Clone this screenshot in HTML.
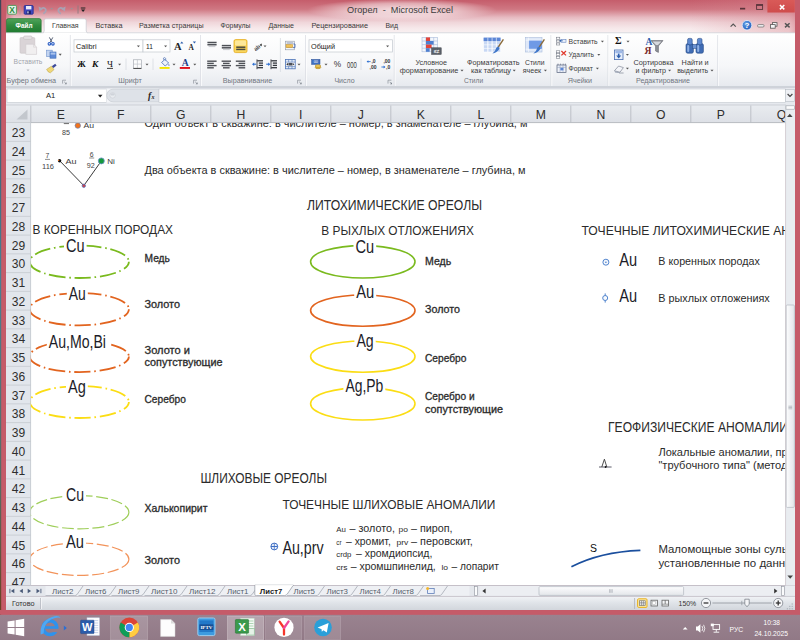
<!DOCTYPE html>
<html lang="ru"><head><meta charset="utf-8"><title>Огорел - Microsoft Excel</title>
<style>
html,body{margin:0;padding:0;width:800px;height:640px;overflow:hidden;background:#947c89}
svg{display:block;font-family:"Liberation Sans", "DejaVu Sans", sans-serif}
text{white-space:pre}
</style></head><body>
<svg width="800" height="640" viewBox="0 0 800 640">
<defs>
<linearGradient id="gTitle" x1="0" y1="0" x2="0" y2="1">
<stop offset="0" stop-color="#c55d6b"/><stop offset="0.28" stop-color="#cf7782"/><stop offset="0.52" stop-color="#e6b9c0"/><stop offset="0.68" stop-color="#f0d6da"/><stop offset="0.85" stop-color="#f6e8ea"/><stop offset="1" stop-color="#f9f1f2"/>
</linearGradient>
<linearGradient id="gRightFade" x1="0" y1="0" x2="1" y2="0">
<stop offset="0" stop-color="#d98892" stop-opacity="0"/><stop offset="0.9" stop-color="#d98892" stop-opacity="0.4"/><stop offset="1" stop-color="#cf707c" stop-opacity="0.7"/>
</linearGradient>
<linearGradient id="gLeftFade" x1="0" y1="0" x2="1" y2="0">
<stop offset="0" stop-color="#c75f6d" stop-opacity="1"/><stop offset="1" stop-color="#c75f6d" stop-opacity="0"/>
</linearGradient>
<radialGradient id="gGlow" cx="0.5" cy="0.5" r="0.5">
<stop offset="0" stop-color="#fff" stop-opacity="0.75"/><stop offset="0.6" stop-color="#fff" stop-opacity="0.45"/><stop offset="1" stop-color="#fff" stop-opacity="0"/>
</radialGradient>
<linearGradient id="gRibbon" x1="0" y1="0" x2="0" y2="1">
<stop offset="0" stop-color="#ffffff"/><stop offset="0.6" stop-color="#f6f7f9"/><stop offset="1" stop-color="#e6e9ee"/>
</linearGradient>
<linearGradient id="gFile" x1="0" y1="0" x2="0" y2="1">
<stop offset="0" stop-color="#4fa35a"/><stop offset="0.5" stop-color="#2f8a3e"/><stop offset="1" stop-color="#1f7a30"/>
</linearGradient>
<linearGradient id="gHdr" x1="0" y1="0" x2="0" y2="1">
<stop offset="0" stop-color="#e9ecf0"/><stop offset="1" stop-color="#dde0e6"/>
</linearGradient>
<linearGradient id="gStatus" x1="0" y1="0" x2="0" y2="1">
<stop offset="0" stop-color="#f1f3f6"/><stop offset="0.5" stop-color="#dfe3e8"/><stop offset="1" stop-color="#d2d6dc"/>
</linearGradient>
<linearGradient id="gScroll" x1="0" y1="0" x2="0" y2="1">
<stop offset="0" stop-color="#fdfdfe"/><stop offset="1" stop-color="#e3e6ea"/>
</linearGradient>
<linearGradient id="gScrollV" x1="0" y1="0" x2="1" y2="0">
<stop offset="0" stop-color="#fdfdfe"/><stop offset="1" stop-color="#e3e6ea"/>
</linearGradient>
<linearGradient id="gClose" x1="0" y1="0" x2="0" y2="1">
<stop offset="0" stop-color="#d95a58"/><stop offset="1" stop-color="#cf4c4c"/>
</linearGradient>
<radialGradient id="gHelp" cx="0.4" cy="0.35" r="0.7">
<stop offset="0" stop-color="#6aa4e8"/><stop offset="1" stop-color="#1c58b8"/>
</radialGradient>
<linearGradient id="gTask" x1="0" y1="0" x2="0" y2="1">
<stop offset="0" stop-color="#9a8390"/><stop offset="1" stop-color="#917986"/>
</linearGradient>
</defs>
<rect x="0" y="614" width="800" height="26" fill="url(#gTask)"/>
<rect x="0" y="0" width="800" height="614.5" fill="#c55b69"/>
<rect x="0" y="0" width="800" height="33" fill="url(#gTitle)"/>
<rect x="690" y="0" width="110" height="33" fill="url(#gRightFade)"/>
<rect x="0" y="0" width="14" height="33" fill="url(#gLeftFade)"/>
<rect x="0" y="0" width="6" height="614" fill="#c55b69"/>
<rect x="795" y="0" width="5" height="614" fill="#c55b69"/>
<linearGradient id="gDesk" x1="0" y1="0" x2="0" y2="1"><stop offset="0" stop-color="#3c4658"/><stop offset="0.45" stop-color="#4a7f92"/><stop offset="0.8" stop-color="#5a6a60"/><stop offset="1" stop-color="#6a4020"/></linearGradient>
<rect x="0" y="0" width="1.2" height="614.5" fill="url(#gDesk)"/>
<ellipse cx="402" cy="10" rx="95" ry="11" fill="url(#gGlow)"/>
<text x="400" y="13.4" font-size="9.4" textLength="106" lengthAdjust="spacingAndGlyphs" fill="#3b3b3b" text-anchor="middle">Огорел  -  Microsoft Excel</text>
<rect x="7.8" y="5.4" width="8.6" height="8.8" fill="#e6f2e8" stroke="#4a9a56" stroke-width="0.9" rx="1"/>
<text x="12.1" y="12.8" font-size="8.4" fill="#2b8a3c" font-weight="bold" text-anchor="middle">X</text>
<line x1="20" y1="5.6" x2="20" y2="14.4" stroke="#b0959b" stroke-width="0.9" />
<rect x="24.2" y="5.6" width="9" height="8.6" fill="#3f48c0" stroke="#262e8f" stroke-width="0.8" rx="0.8"/>
<rect x="26" y="6" width="5.4" height="3.4" fill="#e9ecf8"/>
<rect x="26.6" y="10.8" width="4.2" height="3.2" fill="#1b1f66"/>
<rect x="27.3" y="11.3" width="1.3" height="2.1" fill="#d6daf0"/>
<path d="M40.6,9.6 Q43.6,6.4 45.6,9.2 Q46.6,11.6 43.4,13.8" fill="none" stroke="#a9a2b4" stroke-width="1.7"/>
<path d="M38.6,6.6 L39.4,11.4 L43.2,8.8 Z" fill="#a9a2b4"/>
<path d="M50.2,8.05 L53.2,8.05 L51.7,9.850000000000001 Z" fill="#a08f96"/>
<path d="M63.6,9.6 Q60.6,6.4 58.6,9.2 Q57.6,11.6 60.8,13.8" fill="none" stroke="#a9a2b4" stroke-width="1.7"/>
<path d="M65.6,6.6 L64.8,11.4 L61,8.8 Z" fill="#a9a2b4"/>
<path d="M70.2,8.05 L73.2,8.05 L71.7,9.850000000000001 Z" fill="#a08f96"/>
<line x1="78" y1="5.4" x2="78" y2="13.6" stroke="#8e7a80" stroke-width="0.9" />
<line x1="80.8" y1="8" x2="85.4" y2="8" stroke="#222" stroke-width="1" />
<path d="M81.0,9.549999999999999 L85.19999999999999,9.549999999999999 L83.1,12.07 Z" fill="#222"/>
<rect x="740" y="7.8" width="5.2" height="1.7" fill="#5a343b"/>
<rect x="756.6" y="4.8" width="6" height="4.6" fill="none" stroke="#5a343b" stroke-width="0.9"/>
<line x1="756.2" y1="5" x2="763" y2="5" stroke="#5a343b" stroke-width="1.7" />
<rect x="767.4" y="0" width="27.4" height="12.5" fill="url(#gClose)"/>
<path d="M779.9,5 L784.3,9.4 M784.3,5 L779.9,9.4" fill="none" stroke="#fff" stroke-width="1.5"/>
<path d="M730.6,26.6 L733.2,24 L735.8,26.6" fill="none" stroke="#555" stroke-width="1.2"/>
<circle cx="747" cy="25.2" r="4.8" fill="url(#gHelp)" stroke="#e6eefb" stroke-width="0.8"/>
<text x="747" y="28.2" font-size="8" fill="#fff" font-weight="bold" text-anchor="middle">?</text>
<rect x="757.6" y="24.6" width="6.4" height="2.4" fill="#f4f4f6" stroke="#666" stroke-width="0.7" rx="1"/>
<rect x="772.4" y="22.6" width="4.6" height="3.6" fill="#f4f4f6" stroke="#555" stroke-width="0.8"/>
<rect x="770.6" y="24.6" width="4.6" height="3.6" fill="#f4f4f6" stroke="#555" stroke-width="0.8"/>
<path d="M785,23.2 L789.6,27.4 M789.6,23.2 L785,27.4" fill="none" stroke="#555" stroke-width="1.5"/>
<path d="M6.4,32.8 L6.4,20.6 Q6.4,18.6 8.4,18.6 L39.2,18.6 Q41.2,18.6 41.2,20.6 L41.2,32.8 Z" fill="url(#gFile)" stroke="#1b6b2a" stroke-width="0.6"/>
<text x="24" y="28.3" font-size="7.4" textLength="17" lengthAdjust="spacingAndGlyphs" fill="#fff" font-weight="bold" text-anchor="middle">Файл</text>
<path d="M43.2,33 L44.2,31 L44.2,20.6 Q44.2,18.8 46,18.8 L84.4,18.8 Q86.2,18.8 86.2,20.6 L86.2,31 L87.2,33 Z" fill="#fff" stroke="#c5c9d0" stroke-width="0.7"/>
<text x="52" y="28.2" font-size="7.4" textLength="26.6" lengthAdjust="spacingAndGlyphs" fill="#3a3a3a">Главная</text>
<text x="95.5" y="28.2" font-size="7.4" textLength="27" lengthAdjust="spacingAndGlyphs" fill="#3a3a3a">Вставка</text>
<text x="139" y="28.2" font-size="7.4" textLength="64.5" lengthAdjust="spacingAndGlyphs" fill="#3a3a3a">Разметка страницы</text>
<text x="220.5" y="28.2" font-size="7.4" textLength="30" lengthAdjust="spacingAndGlyphs" fill="#3a3a3a">Формулы</text>
<text x="268.5" y="28.2" font-size="7.4" textLength="25.5" lengthAdjust="spacingAndGlyphs" fill="#3a3a3a">Данные</text>
<text x="311.5" y="28.2" font-size="7.4" textLength="56.5" lengthAdjust="spacingAndGlyphs" fill="#3a3a3a">Рецензирование</text>
<text x="385.5" y="28.2" font-size="7.4" textLength="12.5" lengthAdjust="spacingAndGlyphs" fill="#3a3a3a">Вид</text>
<rect x="6" y="32.8" width="789" height="54.6" fill="url(#gRibbon)"/>
<line x1="6" y1="32.8" x2="43.6" y2="32.8" stroke="#c9cdd4" stroke-width="0.7" />
<line x1="87" y1="32.8" x2="795" y2="32.8" stroke="#c9cdd4" stroke-width="0.7" />
<line x1="70.4" y1="35" x2="70.4" y2="86" stroke="#d4d8de" stroke-width="0.8" />
<line x1="71.2" y1="35" x2="71.2" y2="86" stroke="#ffffff" stroke-width="0.8" />
<line x1="200.6" y1="35" x2="200.6" y2="86" stroke="#d4d8de" stroke-width="0.8" />
<line x1="201.4" y1="35" x2="201.4" y2="86" stroke="#ffffff" stroke-width="0.8" />
<line x1="305.6" y1="35" x2="305.6" y2="86" stroke="#d4d8de" stroke-width="0.8" />
<line x1="306.40000000000003" y1="35" x2="306.40000000000003" y2="86" stroke="#ffffff" stroke-width="0.8" />
<line x1="394.3" y1="35" x2="394.3" y2="86" stroke="#d4d8de" stroke-width="0.8" />
<line x1="395.1" y1="35" x2="395.1" y2="86" stroke="#ffffff" stroke-width="0.8" />
<line x1="551" y1="35" x2="551" y2="86" stroke="#d4d8de" stroke-width="0.8" />
<line x1="551.8" y1="35" x2="551.8" y2="86" stroke="#ffffff" stroke-width="0.8" />
<line x1="608" y1="35" x2="608" y2="86" stroke="#d4d8de" stroke-width="0.8" />
<line x1="608.8" y1="35" x2="608.8" y2="86" stroke="#ffffff" stroke-width="0.8" />
<line x1="717.8" y1="35" x2="717.8" y2="86" stroke="#d4d8de" stroke-width="0.8" />
<line x1="718.5999999999999" y1="35" x2="718.5999999999999" y2="86" stroke="#ffffff" stroke-width="0.8" />
<rect x="20" y="37.6" width="14.8" height="15.6" fill="#dad4d7" stroke="#c9c3c6" stroke-width="0.6" rx="1"/>
<rect x="23.6" y="36" width="8.4" height="3.4" fill="#e4e0e2" stroke="#c2bcbf" stroke-width="0.6" rx="1.2"/>
<path d="M25.8,44.2 L33.6,44.2 L36.6,47.2 L36.6,54.4 L25.8,54.4 Z" fill="#f1eff0" stroke="#cfcacd" stroke-width="0.6"/>
<path d="M33.6,44.2 L33.6,47.2 L36.6,47.2" fill="none" stroke="#cfcacd" stroke-width="0.5"/>
<text x="13.6" y="64.4" font-size="7.4" textLength="28.8" lengthAdjust="spacingAndGlyphs" fill="#a3a6ad">Вставить</text>
<path d="M26.5,69.45 L29.5,69.45 L28,71.25 Z" fill="#b5b8be"/>
<path d="M49.4,37.4 L52,42.2 M52.8,37.4 L50.2,42.2" fill="none" stroke="#5a6478" stroke-width="1"/>
<circle cx="49.4" cy="43.8" r="1.3" fill="#dfe8f8" stroke="#2d5fc4" stroke-width="1.1"/>
<circle cx="52.9" cy="43.8" r="1.3" fill="#dfe8f8" stroke="#2d5fc4" stroke-width="1.1"/>
<rect x="46.6" y="50.2" width="5.6" height="6.4" fill="#c3d4f0" stroke="#6f92cc" stroke-width="0.6"/>
<rect x="50" y="52" width="6" height="6.2" fill="#5f8ad6" stroke="#3f6db8" stroke-width="0.6"/>
<rect x="50.6" y="52.6" width="4.8" height="2" fill="#a9c2ec"/>
<path d="M58.7,53.85 L61.7,53.85 L60.2,55.65 Z" fill="#555"/>
<path d="M46.6,69.4 L51.4,66.2 L54,69.6 L50.4,72.8 Q48,72.6 46.6,69.4 Z" fill="#f0d878" stroke="#b59a3a" stroke-width="0.5"/>
<path d="M51.8,66.2 L55.2,63.8 L56.6,65.4 L53.4,68 Z" fill="#3d4a9a"/>
<text x="6.6" y="83" font-size="7.4" textLength="49.4" lengthAdjust="spacingAndGlyphs" fill="#70757e">Буфер обмена</text>
<path d="M62.60000000000001,83.6 L62.60000000000001,80.2 L66.0,80.2" fill="none" stroke="#8a8f98" stroke-width="0.7"/>
<path d="M66.60000000000001,82.2 L66.60000000000001,84.2 L64.60000000000001,84.2 Z" fill="#7c828b"/>
<line x1="64.2" y1="81.8" x2="66.0" y2="83.6" stroke="#7c828b" stroke-width="0.7" />
<rect x="74" y="39.8" width="69" height="12.2" fill="#fff" stroke="#c3c8cf" stroke-width="0.7"/>
<rect x="143" y="39.8" width="27" height="12.2" fill="#fff" stroke="#c3c8cf" stroke-width="0.7"/>
<text x="76" y="48.8" font-size="7.8" textLength="20.6" lengthAdjust="spacingAndGlyphs" fill="#222">Calibri</text>
<path d="M136.9,45.45 L139.9,45.45 L138.4,47.25 Z" fill="#555"/>
<text x="146" y="48.8" font-size="7.4" textLength="6.8" lengthAdjust="spacingAndGlyphs" fill="#222">11</text>
<path d="M164.1,45.45 L167.1,45.45 L165.6,47.25 Z" fill="#555"/>
<text x="174" y="50" font-size="10.5" fill="#222" font-weight="bold" font-family='"Liberation Serif", "DejaVu Serif", serif'>A</text>
<path d="M180.2,43.4 L183.4,43.4 L181.8,41.4 Z" fill="#2d5fae"/>
<text x="188.6" y="50" font-size="7.4" fill="#222" font-weight="bold" font-family='"Liberation Serif", "DejaVu Serif", serif'>A</text>
<path d="M192.8,41.6 L196,41.6 L194.4,43.6 Z" fill="#2d5fae"/>
<text x="77.2" y="66.8" font-size="9.2" textLength="8.4" lengthAdjust="spacingAndGlyphs" fill="#111" font-weight="bold" font-family='"Liberation Serif", "DejaVu Serif", serif'>Ж</text>
<text x="92" y="66.8" font-size="9.2" textLength="6.4" lengthAdjust="spacingAndGlyphs" fill="#111" font-weight="bold" font-family='"Liberation Serif", "DejaVu Serif", serif' font-style="italic">К</text>
<text x="107" y="66.8" font-size="9.2" textLength="6" lengthAdjust="spacingAndGlyphs" fill="#111" font-family='"Liberation Serif", "DejaVu Serif", serif'>Ч</text>
<line x1="107" y1="68.4" x2="113" y2="68.4" stroke="#111" stroke-width="0.8" />
<path d="M118.1,63.650000000000006 L121.1,63.650000000000006 L119.6,65.45 Z" fill="#555"/>
<line x1="126" y1="58.6" x2="126" y2="70" stroke="#d7dbe1" stroke-width="0.8" />
<rect x="133.4" y="59.8" width="8" height="8.6" fill="#fdfdfd" stroke="#9a9fa8" stroke-width="0.6"/>
<line x1="137.4" y1="59.8" x2="137.4" y2="68.4" stroke="#b7bbc2" stroke-width="0.6" />
<line x1="133.4" y1="64.1" x2="141.4" y2="64.1" stroke="#b7bbc2" stroke-width="0.6" />
<line x1="133.4" y1="68.4" x2="141.4" y2="68.4" stroke="#444" stroke-width="1" />
<path d="M145.5,63.650000000000006 L148.5,63.650000000000006 L147,65.45 Z" fill="#555"/>
<line x1="153" y1="58.6" x2="153" y2="70" stroke="#d7dbe1" stroke-width="0.8" />
<path d="M161.6,62.4 L165,59.4 L168.6,63 L165.2,66 Z" fill="#eef3fb" stroke="#4a6fb3" stroke-width="0.8"/>
<path d="M164,60 Q162.4,57.6 164.6,57.6 Q166.4,57.8 165.6,60.6" fill="none" stroke="#4a6fb3" stroke-width="0.7"/>
<path d="M168.8,63.4 Q170.2,65.4 169,66 Q167.8,65.4 168.8,63.4 Z" fill="#4a6fb3"/>
<rect x="159.6" y="67" width="10" height="1.9" fill="#f3e600"/>
<path d="M172.5,63.650000000000006 L175.5,63.650000000000006 L174,65.45 Z" fill="#555"/>
<text x="181.8" y="66.4" font-size="9.6" fill="#1f3f8a" font-weight="bold" font-family='"Liberation Serif", "DejaVu Serif", serif'>A</text>
<rect x="179.8" y="67" width="10.2" height="1.9" fill="#e0121b"/>
<path d="M193.3,63.650000000000006 L196.3,63.650000000000006 L194.8,65.45 Z" fill="#555"/>
<text x="118.2" y="83" font-size="7.4" textLength="23.6" lengthAdjust="spacingAndGlyphs" fill="#70757e">Шрифт</text>
<path d="M193.6,83.6 L193.6,80.2 L197.0,80.2" fill="none" stroke="#8a8f98" stroke-width="0.7"/>
<path d="M197.6,82.2 L197.6,84.2 L195.6,84.2 Z" fill="#7c828b"/>
<line x1="195.20000000000002" y1="81.8" x2="197.0" y2="83.6" stroke="#7c828b" stroke-width="0.7" />
<line x1="207.4" y1="42.5" x2="216.6" y2="42.5" stroke="#4e5157" stroke-width="1.5" />
<line x1="207.4" y1="44.7" x2="216.6" y2="44.7" stroke="#4e5157" stroke-width="1.5" />
<line x1="208.6" y1="46.6" x2="215.4" y2="46.6" stroke="#b9bcc2" stroke-width="0.8" />
<line x1="221.8" y1="45.6" x2="231.0" y2="45.6" stroke="#4e5157" stroke-width="1.5" />
<line x1="221.8" y1="47.800000000000004" x2="231.0" y2="47.800000000000004" stroke="#4e5157" stroke-width="1.5" />
<line x1="223" y1="49.6" x2="229.8" y2="49.6" stroke="#b9bcc2" stroke-width="0.8" />
<rect x="234" y="39.6" width="13" height="13" fill="#fbd75e" stroke="#e3a91a" stroke-width="0.8" rx="1.6"/>
<rect x="235" y="40.4" width="11" height="5" fill="#fde89a" rx="1.2"/>
<line x1="236.2" y1="47.2" x2="245.39999999999998" y2="47.2" stroke="#4a4a40" stroke-width="1.5" />
<line x1="236.2" y1="49.400000000000006" x2="245.39999999999998" y2="49.400000000000006" stroke="#4a4a40" stroke-width="1.5" />
<text x="252.4" y="49.4" font-size="6" fill="#444" transform="rotate(-40 257 46)">ab</text>
<path d="M255,50.4 L261.6,44.4" fill="none" stroke="#555" stroke-width="0.8"/>
<path d="M261.8,43.6 L262,46.4 L259.6,44.6 Z" fill="#555"/>
<path d="M263.5,45.45 L266.5,45.45 L265,47.25 Z" fill="#555"/>
<line x1="280.4" y1="38" x2="280.4" y2="72" stroke="#d7dbe1" stroke-width="0.8" />
<rect x="285.4" y="41.2" width="9" height="8.6" fill="#f4f6fa" stroke="#8e96a6" stroke-width="0.6"/>
<line x1="286.6" y1="43.0" x2="293.20000000000005" y2="43.0" stroke="#6a7a9a" stroke-width="0.8" />
<line x1="286.6" y1="45.1" x2="291.20000000000005" y2="45.1" stroke="#6a7a9a" stroke-width="0.8" />
<line x1="286.6" y1="47.2" x2="293.20000000000005" y2="47.2" stroke="#6a7a9a" stroke-width="0.8" />
<rect x="286" y="44.6" width="6.6" height="3" fill="#f0c15a" stroke="#c79428" stroke-width="0.5"/>
<path d="M293.4,44 L295,44 L295,47.6 L293,47.6" fill="none" stroke="#3f66b0" stroke-width="0.8"/>
<line x1="207.2" y1="61.2" x2="216.6" y2="61.2" stroke="#4e5157" stroke-width="1.4" />
<line x1="207.2" y1="63.400000000000006" x2="213.79999999999998" y2="63.400000000000006" stroke="#4e5157" stroke-width="1.4" />
<line x1="207.2" y1="65.60000000000001" x2="216.6" y2="65.60000000000001" stroke="#4e5157" stroke-width="1.4" />
<line x1="207.2" y1="67.8" x2="213.79999999999998" y2="67.8" stroke="#4e5157" stroke-width="1.4" />
<line x1="221.6" y1="61.2" x2="231.0" y2="61.2" stroke="#4e5157" stroke-width="1.4" />
<line x1="223.0" y1="63.400000000000006" x2="229.6" y2="63.400000000000006" stroke="#4e5157" stroke-width="1.4" />
<line x1="221.6" y1="65.60000000000001" x2="231.0" y2="65.60000000000001" stroke="#4e5157" stroke-width="1.4" />
<line x1="223.0" y1="67.8" x2="229.6" y2="67.8" stroke="#4e5157" stroke-width="1.4" />
<line x1="235.8" y1="61.2" x2="245.20000000000002" y2="61.2" stroke="#4e5157" stroke-width="1.4" />
<line x1="238.60000000000002" y1="63.400000000000006" x2="245.20000000000002" y2="63.400000000000006" stroke="#4e5157" stroke-width="1.4" />
<line x1="235.8" y1="65.60000000000001" x2="245.20000000000002" y2="65.60000000000001" stroke="#4e5157" stroke-width="1.4" />
<line x1="238.60000000000002" y1="67.8" x2="245.20000000000002" y2="67.8" stroke="#4e5157" stroke-width="1.4" />
<line x1="257.2" y1="60.8" x2="263.0" y2="60.8" stroke="#33363c" stroke-width="1.3" />
<line x1="258.8" y1="63.099999999999994" x2="263.0" y2="63.099999999999994" stroke="#33363c" stroke-width="1.3" />
<line x1="258.8" y1="65.39999999999999" x2="263.0" y2="65.39999999999999" stroke="#33363c" stroke-width="1.3" />
<line x1="257.2" y1="67.7" x2="263.0" y2="67.7" stroke="#33363c" stroke-width="1.3" />
<line x1="257.0" y1="59.4" x2="257.0" y2="69.2" stroke="#33363c" stroke-width="0.9" />
<path d="M256.2,64.2 L253.0,64.2" fill="none" stroke="#2d6fd0" stroke-width="1.1"/>
<path d="M252.0,64.2 L254.2,62.4 L254.2,66 Z" fill="#2d6fd0"/>
<line x1="271.20000000000005" y1="60.8" x2="277.00000000000006" y2="60.8" stroke="#33363c" stroke-width="1.3" />
<line x1="272.80000000000007" y1="63.099999999999994" x2="277.00000000000006" y2="63.099999999999994" stroke="#33363c" stroke-width="1.3" />
<line x1="272.80000000000007" y1="65.39999999999999" x2="277.00000000000006" y2="65.39999999999999" stroke="#33363c" stroke-width="1.3" />
<line x1="271.20000000000005" y1="67.7" x2="277.00000000000006" y2="67.7" stroke="#33363c" stroke-width="1.3" />
<line x1="271.0" y1="59.4" x2="271.0" y2="69.2" stroke="#33363c" stroke-width="0.9" />
<path d="M266.20000000000005,64.2 L269.20000000000005,64.2" fill="none" stroke="#2d6fd0" stroke-width="1.1"/>
<path d="M270.40000000000003,64.2 L268.20000000000005,62.4 L268.20000000000005,66 Z" fill="#2d6fd0"/>
<rect x="285.4" y="59.4" width="9.8" height="9.4" fill="#dfe8f6" stroke="#4f76b8" stroke-width="0.8"/>
<line x1="285.4" y1="62.2" x2="295.2" y2="62.2" stroke="#4f76b8" stroke-width="0.7" />
<line x1="285.4" y1="66.2" x2="295.2" y2="66.2" stroke="#4f76b8" stroke-width="0.7" />
<line x1="288.6" y1="59.4" x2="288.6" y2="62.2" stroke="#4f76b8" stroke-width="0.6" />
<line x1="292" y1="59.4" x2="292" y2="62.2" stroke="#4f76b8" stroke-width="0.6" />
<line x1="288.6" y1="66.2" x2="288.6" y2="68.8" stroke="#4f76b8" stroke-width="0.6" />
<line x1="292" y1="66.2" x2="292" y2="68.8" stroke="#4f76b8" stroke-width="0.6" />
<rect x="286" y="62.6" width="8.6" height="3.2" fill="#f4f6fa"/>
<rect x="288.4" y="62.9" width="3.8" height="2.6" fill="#4a4f5a"/>
<path d="M286.2,64.2 L288,63 L288,65.4 Z M294.4,64.2 L292.6,63 L292.6,65.4 Z" fill="#333"/>
<path d="M297.5,63.650000000000006 L300.5,63.650000000000006 L299,65.45 Z" fill="#555"/>
<text x="222.8" y="83" font-size="7.4" textLength="49.4" lengthAdjust="spacingAndGlyphs" fill="#70757e">Выравнивание</text>
<path d="M297.59999999999997,83.6 L297.59999999999997,80.2 L301.0,80.2" fill="none" stroke="#8a8f98" stroke-width="0.7"/>
<path d="M301.59999999999997,82.2 L301.59999999999997,84.2 L299.59999999999997,84.2 Z" fill="#7c828b"/>
<line x1="299.2" y1="81.8" x2="301.0" y2="83.6" stroke="#7c828b" stroke-width="0.7" />
<rect x="309" y="39.8" width="83.4" height="12.2" fill="#fff" stroke="#c3c8cf" stroke-width="0.7"/>
<text x="311" y="48.8" font-size="7.4" textLength="24" lengthAdjust="spacingAndGlyphs" fill="#222">Общий</text>
<path d="M386.1,45.45 L389.1,45.45 L387.6,47.25 Z" fill="#555"/>
<rect x="311.6" y="59.4" width="8.4" height="5" fill="#3f6fc0" stroke="#2a4f94" stroke-width="0.5"/>
<text x="315.8" y="63.4" font-size="3.8" fill="#fff" text-anchor="middle">00</text>
<ellipse cx="318" cy="67.4" rx="2.8" ry="1.3" fill="#e8b63a" stroke="#a67c14" stroke-width="0.5"/>
<ellipse cx="318" cy="66" rx="2.8" ry="1.3" fill="#f4d060" stroke="#a67c14" stroke-width="0.5"/>
<path d="M324.5,63.650000000000006 L327.5,63.650000000000006 L326,65.45 Z" fill="#555"/>
<text x="333.8" y="67.2" font-size="8.6" textLength="7.4" lengthAdjust="spacingAndGlyphs" fill="#333">%</text>
<text x="347" y="67.6" font-size="9.2" textLength="9.8" lengthAdjust="spacingAndGlyphs" fill="#333">000</text>
<line x1="361" y1="58.6" x2="361" y2="70" stroke="#d7dbe1" stroke-width="0.8" />
<text x="371.4" y="63.4" font-size="5" fill="#333" font-weight="bold">,0</text>
<text x="369.6" y="68.8" font-size="5" fill="#333" font-weight="bold">,00</text>
<path d="M370.6,61.6 L367.4,61.6" fill="none" stroke="#2d6fd0" stroke-width="0.9"/>
<path d="M366.6,61.6 L368.4,60.2 L368.4,63 Z" fill="#2d6fd0"/>
<text x="383.4" y="63.4" font-size="5" fill="#333" font-weight="bold">,00</text>
<text x="386" y="68.8" font-size="5" fill="#333" font-weight="bold">,0</text>
<path d="M381.4,67 L384.6,67" fill="none" stroke="#2d6fd0" stroke-width="0.9"/>
<path d="M385.4,67 L383.6,65.6 L383.6,68.4 Z" fill="#2d6fd0"/>
<text x="334.4" y="83" font-size="7.4" textLength="20.2" lengthAdjust="spacingAndGlyphs" fill="#70757e">Число</text>
<path d="M388.0,83.6 L388.0,80.2 L391.40000000000003,80.2" fill="none" stroke="#8a8f98" stroke-width="0.7"/>
<path d="M392.0,82.2 L392.0,84.2 L390.0,84.2 Z" fill="#7c828b"/>
<line x1="389.6" y1="81.8" x2="391.40000000000003" y2="83.6" stroke="#7c828b" stroke-width="0.7" />
<rect x="422" y="37.4" width="15.6" height="14.4" fill="#f4f7fc" stroke="#a9bbdb" stroke-width="0.6"/>
<line x1="425.9" y1="37.4" x2="425.9" y2="51.8" stroke="#a9bbdb" stroke-width="0.6" />
<line x1="429.8" y1="37.4" x2="429.8" y2="51.8" stroke="#a9bbdb" stroke-width="0.6" />
<line x1="433.7" y1="37.4" x2="433.7" y2="51.8" stroke="#a9bbdb" stroke-width="0.6" />
<line x1="422" y1="41.0" x2="437.6" y2="41.0" stroke="#a9bbdb" stroke-width="0.6" />
<line x1="422" y1="44.6" x2="437.6" y2="44.6" stroke="#a9bbdb" stroke-width="0.6" />
<line x1="422" y1="48.2" x2="437.6" y2="48.2" stroke="#a9bbdb" stroke-width="0.6" />
<rect x="426" y="37.4" width="4" height="3.6" fill="#e2443a"/>
<rect x="426" y="41" width="7.6" height="3.6" fill="#4e7fd0"/>
<rect x="426" y="44.6" width="5.6" height="3.6" fill="#e2443a"/>
<rect x="426" y="48.2" width="3.6" height="3.6" fill="#4e7fd0"/>
<rect x="431.6" y="47.8" width="9.6" height="6.6" fill="#5a5f68" stroke="#3a3e46" stroke-width="0.5"/>
<text x="436.4" y="53" font-size="5" fill="#fff" font-weight="bold" text-anchor="middle">≤≠</text>
<text x="415.4" y="65" font-size="7.4" textLength="31.6" lengthAdjust="spacingAndGlyphs" fill="#3c3c3c">Условное</text>
<text x="399.8" y="72.8" font-size="7.4" textLength="58.6" lengthAdjust="spacingAndGlyphs" fill="#3c3c3c">форматирование</text>
<path d="M460.5,69.65 L463.5,69.65 L462,71.45 Z" fill="#555"/>
<rect x="483.6" y="37.6" width="17" height="14.4" fill="#c8d8f4" stroke="#fff" stroke-width="0.6"/>
<line x1="487.85" y1="37.6" x2="487.85" y2="52.0" stroke="#fff" stroke-width="0.6" />
<line x1="492.1" y1="37.6" x2="492.1" y2="52.0" stroke="#fff" stroke-width="0.6" />
<line x1="496.35" y1="37.6" x2="496.35" y2="52.0" stroke="#fff" stroke-width="0.6" />
<line x1="483.6" y1="41.2" x2="500.6" y2="41.2" stroke="#fff" stroke-width="0.6" />
<line x1="483.6" y1="44.800000000000004" x2="500.6" y2="44.800000000000004" stroke="#fff" stroke-width="0.6" />
<line x1="483.6" y1="48.400000000000006" x2="500.6" y2="48.400000000000006" stroke="#fff" stroke-width="0.6" />
<rect x="483.6" y="37.6" width="17" height="3.6" fill="#5b86d6"/>
<line x1="487.85" y1="37.6" x2="487.85" y2="52" stroke="#fff" stroke-width="0.6" />
<line x1="492.1" y1="37.6" x2="492.1" y2="52" stroke="#fff" stroke-width="0.6" />
<line x1="496.35" y1="37.6" x2="496.35" y2="52" stroke="#fff" stroke-width="0.6" />
<path d="M503.4,39.4 L498.2,47.2" fill="none" stroke="#8a6a3a" stroke-width="1.4"/>
<path d="M498.4,46.6 L499.6,48.6 Q497,53 492.4,53.6 Q495.6,51 496.4,47.4 Z" fill="#3f76c8"/>
<text x="467" y="65" font-size="7.4" textLength="52.6" lengthAdjust="spacingAndGlyphs" fill="#3c3c3c">Форматировать</text>
<text x="471" y="72.8" font-size="7.4" textLength="40" lengthAdjust="spacingAndGlyphs" fill="#3c3c3c">как таблицу</text>
<path d="M512.7,69.65 L515.7,69.65 L514.2,71.45 Z" fill="#555"/>
<rect x="525.6" y="37.6" width="16.4" height="14.4" fill="#dfe8f8" stroke="#a9bbdb" stroke-width="0.6"/>
<rect x="528.6" y="40.2" width="13.4" height="9" fill="#6f9ae6"/>
<line x1="528.6" y1="37.6" x2="528.6" y2="52" stroke="#fff" stroke-width="0.6" />
<line x1="525.6" y1="40.2" x2="542" y2="40.2" stroke="#fff" stroke-width="0.6" />
<line x1="525.6" y1="49.2" x2="542" y2="49.2" stroke="#fff" stroke-width="0.6" />
<path d="M544.4,39.4 L539.2,47.2" fill="none" stroke="#8a6a3a" stroke-width="1.4"/>
<path d="M539.4,46.6 L540.6,48.6 Q538,53 533.4,53.6 Q536.6,51 537.4,47.4 Z" fill="#3f76c8"/>
<text x="525" y="65" font-size="7.4" textLength="19.6" lengthAdjust="spacingAndGlyphs" fill="#3c3c3c">Стили</text>
<text x="522.8" y="72.8" font-size="7.4" textLength="18.4" lengthAdjust="spacingAndGlyphs" fill="#3c3c3c">ячеек</text>
<path d="M543.9,69.65 L546.9,69.65 L545.4,71.45 Z" fill="#555"/>
<text x="464" y="83" font-size="7.4" textLength="19.2" lengthAdjust="spacingAndGlyphs" fill="#70757e">Стили</text>
<rect x="556.4" y="37.2" width="3.4" height="2" fill="#fff" stroke="#666c78" stroke-width="0.5"/>
<rect x="556.4" y="40.1" width="3.4" height="2" fill="#fff" stroke="#666c78" stroke-width="0.5"/>
<rect x="556.4" y="43.0" width="3.4" height="2" fill="#fff" stroke="#666c78" stroke-width="0.5"/>
<rect x="561" y="39.4" width="5" height="2.8" fill="#e9f0fb" stroke="#4a6fb3" stroke-width="0.5"/>
<path d="M562.8,40.8 L560,40.8" fill="none" stroke="#2d5fae" stroke-width="0.8"/>
<path d="M559.4,40.8 L561,39.6 L561,42 Z" fill="#2d5fae"/>
<text x="568.6" y="43.8" font-size="7.4" textLength="29" lengthAdjust="spacingAndGlyphs" fill="#3c3c3c">Вставить</text>
<path d="M600.9,40.65 L603.9,40.65 L602.4,42.449999999999996 Z" fill="#555"/>
<rect x="556.4" y="50.8" width="3.4" height="2" fill="#fff" stroke="#666c78" stroke-width="0.5"/>
<rect x="556.4" y="53.699999999999996" width="3.4" height="2" fill="#fff" stroke="#666c78" stroke-width="0.5"/>
<rect x="556.4" y="56.599999999999994" width="3.4" height="2" fill="#fff" stroke="#666c78" stroke-width="0.5"/>
<path d="M561.4,51 L566,55.4 M566,51 L561.4,55.4" fill="none" stroke="#e03a2e" stroke-width="1.3"/>
<text x="568.6" y="57.2" font-size="7.4" textLength="25.4" lengthAdjust="spacingAndGlyphs" fill="#3c3c3c">Удалить</text>
<path d="M597.3,54.05 L600.3,54.05 L598.8,55.849999999999994 Z" fill="#555"/>
<rect x="557" y="65" width="9" height="7.4" fill="#eef2f9" stroke="#55607a" stroke-width="0.7"/>
<line x1="557" y1="67.4" x2="566" y2="67.4" stroke="#8c9ab8" stroke-width="0.5" />
<line x1="560" y1="65" x2="560" y2="72.4" stroke="#8c9ab8" stroke-width="0.5" />
<line x1="563" y1="65" x2="563" y2="72.4" stroke="#8c9ab8" stroke-width="0.5" />
<rect x="560.4" y="67.8" width="3" height="2.6" fill="#5b86d6"/>
<line x1="558" y1="63.6" x2="558" y2="65" stroke="#55607a" stroke-width="0.6" />
<line x1="560.6" y1="63.6" x2="560.6" y2="65" stroke="#55607a" stroke-width="0.6" />
<line x1="563.2" y1="63.6" x2="563.2" y2="65" stroke="#55607a" stroke-width="0.6" />
<line x1="565.4" y1="63.6" x2="565.4" y2="65" stroke="#55607a" stroke-width="0.6" />
<text x="568.6" y="71" font-size="7.4" textLength="24.2" lengthAdjust="spacingAndGlyphs" fill="#3c3c3c">Формат</text>
<path d="M595.9,67.65 L598.9,67.65 L597.4,69.45 Z" fill="#555"/>
<text x="567.8" y="83" font-size="7.4" textLength="24.2" lengthAdjust="spacingAndGlyphs" fill="#70757e">Ячейки</text>
<text x="615" y="44.2" font-size="9.4" textLength="6.6" lengthAdjust="spacingAndGlyphs" fill="#111" font-weight="bold" font-family='"Liberation Serif", "DejaVu Serif", serif'>Σ</text>
<path d="M626.5,40.65 L629.5,40.65 L628,42.449999999999996 Z" fill="#555"/>
<rect x="614.4" y="50" width="8.6" height="9.6" fill="#e6eefb" stroke="#4a6fb3" stroke-width="0.8"/>
<rect x="615.4" y="51" width="6.6" height="2.2" fill="#9db8e8"/>
<path d="M618.7,53.6 L618.7,56" fill="none" stroke="#2d5fae" stroke-width="1.6"/>
<path d="M616.2,55.6 L621.2,55.6 L618.7,58.4 Z" fill="#2d5fae"/>
<path d="M625.9,54.05 L628.9,54.05 L627.4,55.849999999999994 Z" fill="#555"/>
<path d="M614.4,70.8 L618.6,66 L623.4,67.6 L620,72.2 Z" fill="#f4f5f9" stroke="#7f8796" stroke-width="0.7"/>
<path d="M614.6,71 L620,72.4 L619,73 L615,72.4 Z" fill="#9aa3b4"/>
<line x1="619" y1="73" x2="623.6" y2="73" stroke="#7f8796" stroke-width="0.7" />
<path d="M625.9,67.65 L628.9,67.65 L627.4,69.45 Z" fill="#555"/>
<text x="645.4" y="45" font-size="9.6" fill="#2d5fae" font-weight="bold" font-family='"Liberation Serif", "DejaVu Serif", serif'>A</text>
<text x="644.6" y="54.4" font-size="9.6" fill="#7a2a2a" font-weight="bold" font-family='"Liberation Serif", "DejaVu Serif", serif'>Я</text>
<path d="M651,40.6 L663,40.6 L658.4,46 L658.4,52.4 L655.6,51 L655.6,46 Z" fill="#8d9097" stroke="#5f6269" stroke-width="0.6"/>
<path d="M652.6,41.4 L661.4,41.4 L658,45 L656,45 Z" fill="#d7d9de"/>
<text x="633.4" y="65" font-size="7.4" textLength="40.2" lengthAdjust="spacingAndGlyphs" fill="#3c3c3c">Сортировка</text>
<text x="635.6" y="72.8" font-size="7.4" textLength="30.4" lengthAdjust="spacingAndGlyphs" fill="#3c3c3c">и фильтр</text>
<path d="M668.1,69.65 L671.1,69.65 L669.6,71.45 Z" fill="#555"/>
<rect x="686" y="43.6" width="7.4" height="9.6" fill="#3f6cb4" stroke="#274a86" stroke-width="0.6" rx="1.6"/>
<rect x="696" y="43.6" width="7.4" height="9.6" fill="#3f6cb4" stroke="#274a86" stroke-width="0.6" rx="1.6"/>
<rect x="687.6" y="38.4" width="4.6" height="6.4" fill="#5f8ad0" stroke="#274a86" stroke-width="0.6" rx="1.4"/>
<rect x="697.4" y="38.4" width="4.6" height="6.4" fill="#5f8ad0" stroke="#274a86" stroke-width="0.6" rx="1.4"/>
<rect x="692.6" y="44.4" width="4.2" height="4" fill="#6d93d2" stroke="#274a86" stroke-width="0.5"/>
<rect x="687.2" y="45" width="2" height="7" fill="#8fb0e4" rx="1"/>
<rect x="697.2" y="45" width="2" height="7" fill="#8fb0e4" rx="1"/>
<text x="681.6" y="65" font-size="7.4" textLength="27" lengthAdjust="spacingAndGlyphs" fill="#3c3c3c">Найти и</text>
<text x="677.2" y="72.8" font-size="7.4" textLength="31" lengthAdjust="spacingAndGlyphs" fill="#3c3c3c">выделить</text>
<path d="M710.5,69.65 L713.5,69.65 L712,71.45 Z" fill="#555"/>
<text x="636" y="83" font-size="7.4" textLength="54" lengthAdjust="spacingAndGlyphs" fill="#70757e">Редактирование</text>
<rect x="6" y="86.8" width="789" height="18.4" fill="#e6e9ee"/>
<line x1="6" y1="87" x2="795" y2="87" stroke="#b7bcc4" stroke-width="1" />
<rect x="7" y="89" width="99.5" height="13.4" fill="#fff" stroke="#c3c8cf" stroke-width="0.6"/>
<text x="50.7" y="98.4" font-size="7.6" fill="#222" text-anchor="middle">A1</text>
<path d="M97.9,94.85 L102.5,94.85 L100.2,97.61 Z" fill="#222"/>
<rect x="106.5" y="89" width="53" height="13.4" fill="#f4f5f8"/>
<path d="M113,89.2 L159.2,89.2 L159.2,101.8 L113,101.8 A6.3,6.3 0 0 1 113,89.2 Z" fill="#dee2e8" stroke="#c3c8cf" stroke-width="0.6"/>
<circle cx="112.6" cy="95.4" r="2.7" fill="#e9ecf0" stroke="#c9cdd4" stroke-width="0.6"/><ellipse cx="112.6" cy="94.4" rx="1.9" ry="1.2" fill="#cfd3da"/>
<text x="148" y="99.2" font-size="9.4" fill="#222" font-weight="bold" font-family='"Liberation Serif", "DejaVu Serif", serif' font-style="italic">f</text>
<text x="151.4" y="99.4" font-size="6" fill="#222" font-weight="bold" font-family='"Liberation Serif", "DejaVu Serif", serif' font-style="italic">x</text>
<rect x="159" y="89" width="626.4" height="13.4" fill="#fff" stroke="#c3c8cf" stroke-width="0.6"/>
<rect x="785.4" y="89.6" width="9.2" height="11.8" fill="#eef0f4" stroke="#b9bec6" stroke-width="0.6"/>
<path d="M787.6,94 L790,96.4 L792.4,94" fill="none" stroke="#444" stroke-width="1.2"/>
<rect x="6" y="105" width="779.6" height="480.5" fill="#fff"/>
<rect x="6" y="105" width="780" height="17.6" fill="url(#gHdr)"/>
<line x1="6" y1="105" x2="786" y2="105" stroke="#c2c6cc" stroke-width="0.7" />
<line x1="6" y1="122.6" x2="786" y2="122.6" stroke="#a9adb4" stroke-width="0.8" />
<path d="M27.5,109.5 L27.5,119.5 L16.5,119.5 Z" fill="#c3c7cd"/>
<line x1="30.8" y1="105.5" x2="30.8" y2="122.6" stroke="#b4b8bf" stroke-width="0.8" />
<text x="60.8" y="118.6" font-size="12.2" fill="#2e2e2e" text-anchor="middle">E</text>
<line x1="90.8" y1="105.5" x2="90.8" y2="122.6" stroke="#b4b8bf" stroke-width="0.8" />
<text x="120.8" y="118.6" font-size="12.2" fill="#2e2e2e" text-anchor="middle">F</text>
<line x1="150.8" y1="105.5" x2="150.8" y2="122.6" stroke="#b4b8bf" stroke-width="0.8" />
<text x="180.8" y="118.6" font-size="12.2" fill="#2e2e2e" text-anchor="middle">G</text>
<line x1="210.8" y1="105.5" x2="210.8" y2="122.6" stroke="#b4b8bf" stroke-width="0.8" />
<text x="240.8" y="118.6" font-size="12.2" fill="#2e2e2e" text-anchor="middle">H</text>
<line x1="270.8" y1="105.5" x2="270.8" y2="122.6" stroke="#b4b8bf" stroke-width="0.8" />
<text x="300.8" y="118.6" font-size="12.2" fill="#2e2e2e" text-anchor="middle">I</text>
<line x1="330.8" y1="105.5" x2="330.8" y2="122.6" stroke="#b4b8bf" stroke-width="0.8" />
<text x="360.8" y="118.6" font-size="12.2" fill="#2e2e2e" text-anchor="middle">J</text>
<line x1="390.8" y1="105.5" x2="390.8" y2="122.6" stroke="#b4b8bf" stroke-width="0.8" />
<text x="420.8" y="118.6" font-size="12.2" fill="#2e2e2e" text-anchor="middle">K</text>
<line x1="450.8" y1="105.5" x2="450.8" y2="122.6" stroke="#b4b8bf" stroke-width="0.8" />
<text x="480.8" y="118.6" font-size="12.2" fill="#2e2e2e" text-anchor="middle">L</text>
<line x1="510.8" y1="105.5" x2="510.8" y2="122.6" stroke="#b4b8bf" stroke-width="0.8" />
<text x="540.8" y="118.6" font-size="12.2" fill="#2e2e2e" text-anchor="middle">M</text>
<line x1="570.8" y1="105.5" x2="570.8" y2="122.6" stroke="#b4b8bf" stroke-width="0.8" />
<text x="600.8" y="118.6" font-size="12.2" fill="#2e2e2e" text-anchor="middle">N</text>
<line x1="630.8" y1="105.5" x2="630.8" y2="122.6" stroke="#b4b8bf" stroke-width="0.8" />
<text x="660.8" y="118.6" font-size="12.2" fill="#2e2e2e" text-anchor="middle">O</text>
<line x1="690.8" y1="105.5" x2="690.8" y2="122.6" stroke="#b4b8bf" stroke-width="0.8" />
<text x="720.8" y="118.6" font-size="12.2" fill="#2e2e2e" text-anchor="middle">P</text>
<line x1="750.8" y1="105.5" x2="750.8" y2="122.6" stroke="#b4b8bf" stroke-width="0.8" />
<text x="776.8" y="118.6" font-size="12.2" fill="#2e2e2e">Q</text>
<rect x="6" y="122.6" width="24.8" height="463" fill="#e2e6ec"/>
<line x1="30.6" y1="122.6" x2="30.6" y2="585.5" stroke="#c0c4cb" stroke-width="0.8" />
<line x1="6" y1="141.35" x2="30.8" y2="141.35" stroke="#c2c6cc" stroke-width="0.7" />
<text x="18.4" y="137.0" font-size="12.2" textLength="13.4" lengthAdjust="spacingAndGlyphs" fill="#2e2e2e" text-anchor="middle">23</text>
<line x1="6" y1="160.1" x2="30.8" y2="160.1" stroke="#c2c6cc" stroke-width="0.7" />
<text x="18.4" y="155.75" font-size="12.2" textLength="13.4" lengthAdjust="spacingAndGlyphs" fill="#2e2e2e" text-anchor="middle">24</text>
<line x1="6" y1="178.85" x2="30.8" y2="178.85" stroke="#c2c6cc" stroke-width="0.7" />
<text x="18.4" y="174.5" font-size="12.2" textLength="13.4" lengthAdjust="spacingAndGlyphs" fill="#2e2e2e" text-anchor="middle">25</text>
<line x1="6" y1="197.6" x2="30.8" y2="197.6" stroke="#c2c6cc" stroke-width="0.7" />
<text x="18.4" y="193.25" font-size="12.2" textLength="13.4" lengthAdjust="spacingAndGlyphs" fill="#2e2e2e" text-anchor="middle">26</text>
<line x1="6" y1="216.35" x2="30.8" y2="216.35" stroke="#c2c6cc" stroke-width="0.7" />
<text x="18.4" y="212.0" font-size="12.2" textLength="13.4" lengthAdjust="spacingAndGlyphs" fill="#2e2e2e" text-anchor="middle">27</text>
<line x1="6" y1="235.1" x2="30.8" y2="235.1" stroke="#c2c6cc" stroke-width="0.7" />
<text x="18.4" y="230.75" font-size="12.2" textLength="13.4" lengthAdjust="spacingAndGlyphs" fill="#2e2e2e" text-anchor="middle">28</text>
<line x1="6" y1="253.85" x2="30.8" y2="253.85" stroke="#c2c6cc" stroke-width="0.7" />
<text x="18.4" y="249.5" font-size="12.2" textLength="13.4" lengthAdjust="spacingAndGlyphs" fill="#2e2e2e" text-anchor="middle">29</text>
<line x1="6" y1="272.6" x2="30.8" y2="272.6" stroke="#c2c6cc" stroke-width="0.7" />
<text x="18.4" y="268.25" font-size="12.2" textLength="13.4" lengthAdjust="spacingAndGlyphs" fill="#2e2e2e" text-anchor="middle">30</text>
<line x1="6" y1="291.35" x2="30.8" y2="291.35" stroke="#c2c6cc" stroke-width="0.7" />
<text x="18.4" y="287.0" font-size="12.2" textLength="13.4" lengthAdjust="spacingAndGlyphs" fill="#2e2e2e" text-anchor="middle">31</text>
<line x1="6" y1="310.1" x2="30.8" y2="310.1" stroke="#c2c6cc" stroke-width="0.7" />
<text x="18.4" y="305.75" font-size="12.2" textLength="13.4" lengthAdjust="spacingAndGlyphs" fill="#2e2e2e" text-anchor="middle">32</text>
<line x1="6" y1="328.85" x2="30.8" y2="328.85" stroke="#c2c6cc" stroke-width="0.7" />
<text x="18.4" y="324.5" font-size="12.2" textLength="13.4" lengthAdjust="spacingAndGlyphs" fill="#2e2e2e" text-anchor="middle">33</text>
<line x1="6" y1="347.6" x2="30.8" y2="347.6" stroke="#c2c6cc" stroke-width="0.7" />
<text x="18.4" y="343.25" font-size="12.2" textLength="13.4" lengthAdjust="spacingAndGlyphs" fill="#2e2e2e" text-anchor="middle">34</text>
<line x1="6" y1="366.35" x2="30.8" y2="366.35" stroke="#c2c6cc" stroke-width="0.7" />
<text x="18.4" y="362.0" font-size="12.2" textLength="13.4" lengthAdjust="spacingAndGlyphs" fill="#2e2e2e" text-anchor="middle">35</text>
<line x1="6" y1="385.1" x2="30.8" y2="385.1" stroke="#c2c6cc" stroke-width="0.7" />
<text x="18.4" y="380.75" font-size="12.2" textLength="13.4" lengthAdjust="spacingAndGlyphs" fill="#2e2e2e" text-anchor="middle">36</text>
<line x1="6" y1="403.85" x2="30.8" y2="403.85" stroke="#c2c6cc" stroke-width="0.7" />
<text x="18.4" y="399.5" font-size="12.2" textLength="13.4" lengthAdjust="spacingAndGlyphs" fill="#2e2e2e" text-anchor="middle">37</text>
<line x1="6" y1="422.6" x2="30.8" y2="422.6" stroke="#c2c6cc" stroke-width="0.7" />
<text x="18.4" y="418.25" font-size="12.2" textLength="13.4" lengthAdjust="spacingAndGlyphs" fill="#2e2e2e" text-anchor="middle">38</text>
<line x1="6" y1="441.35" x2="30.8" y2="441.35" stroke="#c2c6cc" stroke-width="0.7" />
<text x="18.4" y="437.0" font-size="12.2" textLength="13.4" lengthAdjust="spacingAndGlyphs" fill="#2e2e2e" text-anchor="middle">39</text>
<line x1="6" y1="460.1" x2="30.8" y2="460.1" stroke="#c2c6cc" stroke-width="0.7" />
<text x="18.4" y="455.75" font-size="12.2" textLength="13.4" lengthAdjust="spacingAndGlyphs" fill="#2e2e2e" text-anchor="middle">40</text>
<line x1="6" y1="478.85" x2="30.8" y2="478.85" stroke="#c2c6cc" stroke-width="0.7" />
<text x="18.4" y="474.5" font-size="12.2" textLength="13.4" lengthAdjust="spacingAndGlyphs" fill="#2e2e2e" text-anchor="middle">41</text>
<line x1="6" y1="497.6" x2="30.8" y2="497.6" stroke="#c2c6cc" stroke-width="0.7" />
<text x="18.4" y="493.25" font-size="12.2" textLength="13.4" lengthAdjust="spacingAndGlyphs" fill="#2e2e2e" text-anchor="middle">42</text>
<line x1="6" y1="516.35" x2="30.8" y2="516.35" stroke="#c2c6cc" stroke-width="0.7" />
<text x="18.4" y="512.0" font-size="12.2" textLength="13.4" lengthAdjust="spacingAndGlyphs" fill="#2e2e2e" text-anchor="middle">43</text>
<line x1="6" y1="535.1" x2="30.8" y2="535.1" stroke="#c2c6cc" stroke-width="0.7" />
<text x="18.4" y="530.75" font-size="12.2" textLength="13.4" lengthAdjust="spacingAndGlyphs" fill="#2e2e2e" text-anchor="middle">44</text>
<line x1="6" y1="553.85" x2="30.8" y2="553.85" stroke="#c2c6cc" stroke-width="0.7" />
<text x="18.4" y="549.5" font-size="12.2" textLength="13.4" lengthAdjust="spacingAndGlyphs" fill="#2e2e2e" text-anchor="middle">45</text>
<line x1="6" y1="572.6" x2="30.8" y2="572.6" stroke="#c2c6cc" stroke-width="0.7" />
<text x="18.4" y="568.25" font-size="12.2" textLength="13.4" lengthAdjust="spacingAndGlyphs" fill="#2e2e2e" text-anchor="middle">46</text>
<line x1="6" y1="591.35" x2="30.8" y2="591.35" stroke="#c2c6cc" stroke-width="0.7" />
<text x="18.4" y="587.0" font-size="12.2" textLength="13.4" lengthAdjust="spacingAndGlyphs" fill="#2e2e2e" text-anchor="middle">47</text>
<clipPath id="cSheet"><rect x="30.8" y="123" width="754.6" height="462.5"/></clipPath>
<g clip-path="url(#cSheet)">
<line x1="63.8" y1="123.6" x2="69" y2="123.6" stroke="#444" stroke-width="0.8" />
<text x="62" y="135.4" font-size="6.6" textLength="8" lengthAdjust="spacingAndGlyphs" fill="#444">85</text>
<circle cx="77.8" cy="125.6" r="2.7" fill="#f0731c" stroke="#6b7fb0" stroke-width="0.7"/>
<text x="83.6" y="128.4" font-size="7.6" textLength="10.6" lengthAdjust="spacingAndGlyphs" fill="#3a3a3a">Au</text>
<text x="144.5" y="126.6" font-size="10.9" textLength="383" lengthAdjust="spacingAndGlyphs" fill="#2b2b2b">Один объект в скважине: в числителе – номер, в знаменателе – глубина, м</text>
<text x="45.6" y="158.4" font-size="6.6" textLength="3.8" lengthAdjust="spacingAndGlyphs" fill="#444">7</text>
<line x1="45" y1="159.4" x2="50" y2="159.4" stroke="#444" stroke-width="0.6" />
<text x="42" y="168.6" font-size="6.6" textLength="12" lengthAdjust="spacingAndGlyphs" fill="#444">116</text>
<text x="89.8" y="157" font-size="6.6" textLength="3.8" lengthAdjust="spacingAndGlyphs" fill="#444">6</text>
<line x1="89.2" y1="158" x2="94.2" y2="158" stroke="#444" stroke-width="0.6" />
<text x="86.8" y="168.2" font-size="6.6" textLength="8" lengthAdjust="spacingAndGlyphs" fill="#444">92</text>
<line x1="59.6" y1="160.7" x2="83.8" y2="185.6" stroke="#222" stroke-width="0.9" />
<line x1="101.3" y1="161" x2="83.8" y2="185.6" stroke="#222" stroke-width="0.9" />
<circle cx="59.6" cy="160.7" r="1.7" fill="#111"/>
<circle cx="58.6" cy="160.4" r="0.7" fill="#f0731c"/>
<text x="65.6" y="164" font-size="7.6" textLength="11" lengthAdjust="spacingAndGlyphs" fill="#3a3a3a">Au</text>
<circle cx="101.3" cy="160.9" r="3" fill="#159a3c" stroke="#6b8fc8" stroke-width="0.8"/>
<text x="107.2" y="164" font-size="7.6" textLength="7.6" lengthAdjust="spacingAndGlyphs" fill="#3a3a3a">Ni</text>
<circle cx="83.8" cy="185.8" r="1.7" fill="#c9444a" stroke="#4a6fc0" stroke-width="0.7"/>
<text x="144.5" y="173.8" font-size="10.9" textLength="381" lengthAdjust="spacingAndGlyphs" fill="#2b2b2b">Два объекта в скважине: в числителе – номер, в знаменателе – глубина, м</text>
<text x="307" y="210" font-size="14.7" textLength="175" lengthAdjust="spacingAndGlyphs" fill="#2b2b2b">ЛИТОХИМИЧЕСКИЕ ОРЕОЛЫ</text>
<text x="32.6" y="234.4" font-size="12.2" textLength="140.4" lengthAdjust="spacingAndGlyphs" fill="#2b2b2b">В КОРЕННЫХ ПОРОДАХ</text>
<text x="321.3" y="234.5" font-size="12.2" textLength="152.5" lengthAdjust="spacingAndGlyphs" fill="#2b2b2b">В РЫХЛЫХ ОТЛОЖЕНИЯХ</text>
<text x="581.5" y="234.5" font-size="12.2" textLength="262" lengthAdjust="spacingAndGlyphs" fill="#2b2b2b">ТОЧЕЧНЫЕ ЛИТОХИМИЧЕСКИЕ АНОМАЛИИ</text>
<text x="200.4" y="483.4" font-size="14.7" textLength="126.6" lengthAdjust="spacingAndGlyphs" fill="#2b2b2b">ШЛИХОВЫЕ ОРЕОЛЫ</text>
<text x="282.4" y="508.6" font-size="12.2" textLength="213" lengthAdjust="spacingAndGlyphs" fill="#2b2b2b">ТОЧЕЧНЫЕ ШЛИХОВЫЕ АНОМАЛИИ</text>
<text x="608" y="432" font-size="14.7" textLength="180" lengthAdjust="spacingAndGlyphs" fill="#2b2b2b">ГЕОФИЗИЧЕСКИЕ АНОМАЛИИ</text>
<ellipse cx="79.3" cy="261.8" rx="49.6" ry="16.2" fill="none" stroke="#7aba1e" stroke-width="1.8" stroke-dasharray="16.4 3.7 1.6 3.7" stroke-dashoffset="7.4"/>
<rect x="64" y="238.0848" width="22.599999999999994" height="16.315199999999997" fill="#fff"/>
<text x="66" y="252.4" font-size="17.9" textLength="18.6" lengthAdjust="spacingAndGlyphs" fill="#1c1c28">Cu</text>
<ellipse cx="79.3" cy="309.2" rx="49.6" ry="16.2" fill="none" stroke="#e2641f" stroke-width="1.8" stroke-dasharray="16.4 3.7 1.6 3.7" stroke-dashoffset="7.4"/>
<rect x="66.8" y="285.6848" width="21.0" height="16.315199999999997" fill="#fff"/>
<text x="68.8" y="300" font-size="17.9" textLength="17.0" lengthAdjust="spacingAndGlyphs" fill="#1c1c28">Au</text>
<ellipse cx="79.3" cy="356.5" rx="49.6" ry="15.6" fill="none" stroke="#e2641f" stroke-width="1.8" stroke-dasharray="16.4 3.7 1.6 3.7" stroke-dashoffset="7.4"/>
<rect x="46.8" y="333.1848" width="61.2" height="16.315199999999997" fill="#fff"/>
<text x="48.8" y="347.5" font-size="17.9" textLength="57.2" lengthAdjust="spacingAndGlyphs" fill="#1c1c28">Au,Mo,Bi</text>
<ellipse cx="79.3" cy="402" rx="49.6" ry="16" fill="none" stroke="#fbdd14" stroke-width="1.8" stroke-dasharray="16.4 3.7 1.6 3.7" stroke-dashoffset="7.4"/>
<rect x="66" y="378.6848" width="21.799999999999997" height="16.315199999999997" fill="#fff"/>
<text x="68" y="393" font-size="17.9" textLength="17.8" lengthAdjust="spacingAndGlyphs" fill="#1c1c28">Ag</text>
<ellipse cx="79.3" cy="512.2" rx="49.6" ry="16.6" fill="none" stroke="#9fce5a" stroke-width="1.2" stroke-dasharray="11.6 3.6" stroke-dashoffset="0"/>
<rect x="64" y="486.1848" width="22" height="16.315199999999997" fill="#fff"/>
<text x="66" y="500.5" font-size="17.9" textLength="18" lengthAdjust="spacingAndGlyphs" fill="#1c1c28">Cu</text>
<ellipse cx="79.3" cy="559.2" rx="49.6" ry="16.2" fill="none" stroke="#f2935a" stroke-width="1.2" stroke-dasharray="11.6 3.6" stroke-dashoffset="0"/>
<rect x="64" y="533.1848" width="22" height="16.315199999999997" fill="#fff"/>
<text x="66" y="547.5" font-size="17.9" textLength="18" lengthAdjust="spacingAndGlyphs" fill="#1c1c28">Au</text>
<ellipse cx="362.8" cy="261.8" rx="52.2" ry="16.2" fill="none" stroke="#7aba1e" stroke-width="1.6"/>
<rect x="353.5" y="238.1848" width="22.69999999999999" height="16.315199999999997" fill="#fff"/>
<text x="355.5" y="252.5" font-size="17.9" textLength="18.7" lengthAdjust="spacingAndGlyphs" fill="#1c1c28">Cu</text>
<ellipse cx="362.8" cy="310.6" rx="52.2" ry="15.6" fill="none" stroke="#e2641f" stroke-width="1.6"/>
<rect x="354.2" y="283.6848" width="22.0" height="16.315199999999997" fill="#fff"/>
<text x="356.2" y="298" font-size="17.9" textLength="18.0" lengthAdjust="spacingAndGlyphs" fill="#1c1c28">Au</text>
<ellipse cx="362.8" cy="356.6" rx="52.2" ry="15.6" fill="none" stroke="#fbdd14" stroke-width="1.6"/>
<rect x="354.4" y="332.1848" width="21.30000000000001" height="16.315199999999997" fill="#fff"/>
<text x="356.4" y="346.5" font-size="17.9" textLength="17.3" lengthAdjust="spacingAndGlyphs" fill="#1c1c28">Ag</text>
<ellipse cx="362.8" cy="403.8" rx="52.2" ry="16.2" fill="none" stroke="#fbdd14" stroke-width="1.6"/>
<rect x="343.4" y="377.1848" width="41.900000000000034" height="16.315199999999997" fill="#fff"/>
<text x="345.4" y="391.5" font-size="17.9" textLength="37.9" lengthAdjust="spacingAndGlyphs" fill="#1c1c28">Ag,Pb</text>
<text x="144.5" y="261.6" font-size="10.3" textLength="25.4" lengthAdjust="spacingAndGlyphs" fill="#2b2b2b" stroke="#2b2b2b" stroke-width="0.3">Медь</text>
<text x="144.5" y="307.5" font-size="10.3" textLength="35.5" lengthAdjust="spacingAndGlyphs" fill="#2b2b2b" stroke="#2b2b2b" stroke-width="0.3">Золото</text>
<text x="144.5" y="353.8" font-size="10.3" textLength="45.5" lengthAdjust="spacingAndGlyphs" fill="#2b2b2b" stroke="#2b2b2b" stroke-width="0.3">Золото и</text>
<text x="144.5" y="366" font-size="10.3" textLength="78" lengthAdjust="spacingAndGlyphs" fill="#2b2b2b" stroke="#2b2b2b" stroke-width="0.3">сопутствующие</text>
<text x="144.5" y="402.5" font-size="10.3" textLength="41.3" lengthAdjust="spacingAndGlyphs" fill="#2b2b2b" stroke="#2b2b2b" stroke-width="0.3">Серебро</text>
<text x="144.5" y="511.6" font-size="10.3" textLength="63" lengthAdjust="spacingAndGlyphs" fill="#2b2b2b" stroke="#2b2b2b" stroke-width="0.3">Халькопирит</text>
<text x="144.5" y="563.8" font-size="10.3" textLength="35.5" lengthAdjust="spacingAndGlyphs" fill="#2b2b2b" stroke="#2b2b2b" stroke-width="0.3">Золото</text>
<text x="425" y="264.5" font-size="10.3" textLength="26.2" lengthAdjust="spacingAndGlyphs" fill="#2b2b2b" stroke="#2b2b2b" stroke-width="0.3">Медь</text>
<text x="425" y="312.5" font-size="10.3" textLength="35" lengthAdjust="spacingAndGlyphs" fill="#2b2b2b" stroke="#2b2b2b" stroke-width="0.3">Золото</text>
<text x="425" y="362" font-size="10.3" textLength="41.4" lengthAdjust="spacingAndGlyphs" fill="#2b2b2b" stroke="#2b2b2b" stroke-width="0.3">Серебро</text>
<text x="425" y="400" font-size="10.3" textLength="49.6" lengthAdjust="spacingAndGlyphs" fill="#2b2b2b" stroke="#2b2b2b" stroke-width="0.3">Серебро и</text>
<text x="425" y="412.5" font-size="10.3" textLength="78" lengthAdjust="spacingAndGlyphs" fill="#2b2b2b" stroke="#2b2b2b" stroke-width="0.3">сопутствующие</text>
<circle cx="605.9" cy="262.2" r="3" fill="#f4f7fc" stroke="#3f78c8" stroke-width="0.9"/>
<circle cx="605.9" cy="262.2" r="0.8" fill="#3f78c8"/>
<text x="619.2" y="265.7" font-size="17.9" textLength="17.9" lengthAdjust="spacingAndGlyphs" fill="#1c1c28">Au</text>
<text x="658.3" y="265.3" font-size="10.9" textLength="101.5" lengthAdjust="spacingAndGlyphs" fill="#2b2b2b">В коренных породах</text>
<line x1="605.2" y1="293.4" x2="605.2" y2="302.6" stroke="#3f78c8" stroke-width="0.9" />
<circle cx="605.2" cy="298" r="2.5" fill="#f8fafd" stroke="#3f78c8" stroke-width="0.9"/>
<text x="619.2" y="302" font-size="17.9" textLength="17.9" lengthAdjust="spacingAndGlyphs" fill="#1c1c28">Au</text>
<text x="658.3" y="301.8" font-size="10.9" textLength="111.5" lengthAdjust="spacingAndGlyphs" fill="#2b2b2b">В рыхлых отложениях</text>
<text x="658.4" y="455.6" font-size="10.9" textLength="186" lengthAdjust="spacingAndGlyphs" fill="#2b2b2b">Локальные аномалии, проявленные</text>
<text x="658.4" y="469" font-size="10.9" textLength="137" lengthAdjust="spacingAndGlyphs" fill="#2b2b2b">"трубочного типа" (методы</text>
<line x1="599" y1="467" x2="611.6" y2="467" stroke="#334" stroke-width="0.8" />
<path d="M601.8,467 L604.4,459.2 L606.8,467" fill="none" stroke="#3a3a3a" stroke-width="0.9"/>
<circle cx="605.6" cy="467" r="0.9" fill="#111"/>
<text x="590" y="552" font-size="11.8" textLength="7" lengthAdjust="spacingAndGlyphs" fill="#0c0c0c">S</text>
<path d="M571.4,566.8 Q600,552 640.4,550.4" fill="none" stroke="#1b4f9e" stroke-width="1.7"/>
<text x="658.4" y="553.4" font-size="10.9" textLength="170.5" lengthAdjust="spacingAndGlyphs" fill="#2b2b2b">Маломощные зоны сульфидной</text>
<text x="658.4" y="567" font-size="10.9" textLength="143" lengthAdjust="spacingAndGlyphs" fill="#2b2b2b">установленные по данным</text>
<circle cx="274.3" cy="546.5" r="3.4" fill="#eef3fb" stroke="#3f6fc4" stroke-width="1"/>
<line x1="270.9" y1="546.5" x2="277.7" y2="546.5" stroke="#3f6fc4" stroke-width="1.1" />
<line x1="274.3" y1="543.1" x2="274.3" y2="549.9" stroke="#3f6fc4" stroke-width="0.8" />
<text x="282.4" y="553.5" font-size="17.9" textLength="41.2" lengthAdjust="spacingAndGlyphs" fill="#1c1c28">Au,prv</text>
<text x="336.3" y="531.6" font-size="7.2" textLength="9.6" lengthAdjust="spacingAndGlyphs" fill="#2b2b2b">Au</text>
<text x="349.6" y="531.6" font-size="10.9" textLength="45.4" lengthAdjust="spacingAndGlyphs" fill="#2b2b2b">– золото,</text>
<text x="398.6" y="531.6" font-size="7.2" textLength="9.4" lengthAdjust="spacingAndGlyphs" fill="#2b2b2b">po</text>
<text x="411" y="531.6" font-size="10.9" textLength="41.6" lengthAdjust="spacingAndGlyphs" fill="#2b2b2b">– пироп,</text>
<text x="336.3" y="544.7" font-size="7.2" textLength="5.2" lengthAdjust="spacingAndGlyphs" fill="#2b2b2b">cr</text>
<text x="346" y="544.7" font-size="10.9" textLength="44.8" lengthAdjust="spacingAndGlyphs" fill="#2b2b2b">– хромит,</text>
<text x="396.4" y="544.7" font-size="7.2" textLength="11.9" lengthAdjust="spacingAndGlyphs" fill="#2b2b2b">prv</text>
<text x="411" y="544.7" font-size="10.9" textLength="61.9" lengthAdjust="spacingAndGlyphs" fill="#2b2b2b">– перовскит,</text>
<text x="336.3" y="557.4" font-size="7.2" textLength="15.1" lengthAdjust="spacingAndGlyphs" fill="#2b2b2b">crdp</text>
<text x="355.9" y="557.4" font-size="10.9" textLength="76.5" lengthAdjust="spacingAndGlyphs" fill="#2b2b2b">– хромдиопсид,</text>
<text x="336.3" y="570" font-size="7.2" textLength="11.3" lengthAdjust="spacingAndGlyphs" fill="#2b2b2b">crs</text>
<text x="350.7" y="570" font-size="10.9" textLength="85.1" lengthAdjust="spacingAndGlyphs" fill="#2b2b2b">– хромшпинелид,</text>
<text x="441.4" y="570" font-size="7.2" textLength="6.6" lengthAdjust="spacingAndGlyphs" fill="#2b2b2b">lo</text>
<text x="451.5" y="570" font-size="10.9" textLength="47.3" lengthAdjust="spacingAndGlyphs" fill="#2b2b2b">– лопарит</text>
</g>
<rect x="785.6" y="105" width="9.4" height="480.5" fill="#e9ecf0"/>
<line x1="785.6" y1="105" x2="785.6" y2="585.5" stroke="#cdd1d7" stroke-width="0.7" />
<rect x="786" y="105.8" width="8.4" height="3.4" fill="#fbfbfc" stroke="#9a9fa7" stroke-width="0.6"/>
<path d="M787,117 L792.6,117 L789.8,113.8 Z" fill="#444"/>
<rect x="786.2" y="305" width="8.2" height="202.4" fill="url(#gScrollV)" stroke="#b3b8c0" stroke-width="0.7" rx="1"/>
<line x1="788.4" y1="406.2" x2="792.2" y2="406.2" stroke="#9aa0a8" stroke-width="0.6" />
<line x1="788.4" y1="407.5" x2="792.2" y2="407.5" stroke="#9aa0a8" stroke-width="0.6" />
<line x1="788.4" y1="408.8" x2="792.2" y2="408.8" stroke="#9aa0a8" stroke-width="0.6" />
<path d="M787.4,575.4 L793,575.4 L790.2,578.8 Z" fill="#444"/>
<rect x="6" y="585.5" width="789" height="11" fill="#e4e7ec"/>
<line x1="6" y1="585.5" x2="795" y2="585.5" stroke="#b7bcc4" stroke-width="0.7" />
<path d="M14.3,588.8000000000001 L14.3,593.1999999999999 L10.9,591 Z" fill="#4a5a78"/>
<line x1="9.9" y1="588.8000000000001" x2="9.9" y2="593.1999999999999" stroke="#4a5a78" stroke-width="0.9" />
<path d="M22.9,588.8000000000001 L22.9,593.1999999999999 L19.5,591 Z" fill="#4a5a78"/>
<path d="M27.700000000000003,588.8000000000001 L27.700000000000003,593.1999999999999 L31.1,591 Z" fill="#4a5a78"/>
<path d="M36.5,588.8000000000001 L36.5,593.1999999999999 L39.9,591 Z" fill="#4a5a78"/>
<line x1="40.9" y1="588.8000000000001" x2="40.9" y2="593.1999999999999" stroke="#4a5a78" stroke-width="0.9" />
<rect x="45.5" y="586" width="424" height="10" fill="#eef0f4"/>
<path d="M83.0,586 L77.0,594.6 Q76.1,595.6 74.5,595.6 L45.5,595.6" fill="none" stroke="#9ba1aa" stroke-width="0.7"/>
<text x="52" y="593.6" font-size="7.6" textLength="21.5" lengthAdjust="spacingAndGlyphs" fill="#555e6b">Лист2</text>
<path d="M116.0,586 L110.0,594.6 Q109.1,595.6 107.5,595.6 L78.5,595.6" fill="none" stroke="#9ba1aa" stroke-width="0.7"/>
<text x="85" y="593.6" font-size="7.6" textLength="21.5" lengthAdjust="spacingAndGlyphs" fill="#555e6b">Лист6</text>
<path d="M149.0,586 L143.0,594.6 Q142.1,595.6 140.5,595.6 L111.5,595.6" fill="none" stroke="#9ba1aa" stroke-width="0.7"/>
<text x="118" y="593.6" font-size="7.6" textLength="21.5" lengthAdjust="spacingAndGlyphs" fill="#555e6b">Лист9</text>
<path d="M187.0,586 L181.0,594.6 Q180.1,595.6 178.5,595.6 L144.5,595.6" fill="none" stroke="#9ba1aa" stroke-width="0.7"/>
<text x="151" y="593.6" font-size="7.6" textLength="26.5" lengthAdjust="spacingAndGlyphs" fill="#555e6b">Лист10</text>
<path d="M225.0,586 L219.0,594.6 Q218.1,595.6 216.5,595.6 L182.5,595.6" fill="none" stroke="#9ba1aa" stroke-width="0.7"/>
<text x="189" y="593.6" font-size="7.6" textLength="26.5" lengthAdjust="spacingAndGlyphs" fill="#555e6b">Лист12</text>
<path d="M258.0,586 L252.0,594.6 Q251.1,595.6 249.5,595.6 L220.5,595.6" fill="none" stroke="#9ba1aa" stroke-width="0.7"/>
<text x="227" y="593.6" font-size="7.6" textLength="21.5" lengthAdjust="spacingAndGlyphs" fill="#555e6b">Лист1</text>
<path d="M254.8,585.2 L254.8,594.4 Q254.8,595.6 256.3,595.6 L284.3,595.6 Q286.3,595.6 287.3,594 L293.3,585.2 Z" fill="#fff" stroke="#8e949d" stroke-width="0.7"/>
<line x1="255.3" y1="585.4" x2="292.90000000000003" y2="585.4" stroke="#fff" stroke-width="1" />
<text x="259.8" y="593.6" font-size="7.6" textLength="22.5" lengthAdjust="spacingAndGlyphs" fill="#222" font-weight="bold">Лист7</text>
<path d="M324.5,586 L318.5,594.6 Q317.6,595.6 316.0,595.6 L287.0,595.6" fill="none" stroke="#9ba1aa" stroke-width="0.7"/>
<text x="293.5" y="593.6" font-size="7.6" textLength="21.5" lengthAdjust="spacingAndGlyphs" fill="#555e6b">Лист5</text>
<path d="M357.5,586 L351.5,594.6 Q350.6,595.6 349.0,595.6 L320.0,595.6" fill="none" stroke="#9ba1aa" stroke-width="0.7"/>
<text x="326.5" y="593.6" font-size="7.6" textLength="21.5" lengthAdjust="spacingAndGlyphs" fill="#555e6b">Лист3</text>
<path d="M390.5,586 L384.5,594.6 Q383.6,595.6 382.0,595.6 L353.0,595.6" fill="none" stroke="#9ba1aa" stroke-width="0.7"/>
<text x="359.5" y="593.6" font-size="7.6" textLength="21.5" lengthAdjust="spacingAndGlyphs" fill="#555e6b">Лист4</text>
<path d="M423.5,586 L417.5,594.6 Q416.6,595.6 415.0,595.6 L386.0,595.6" fill="none" stroke="#9ba1aa" stroke-width="0.7"/>
<text x="392.5" y="593.6" font-size="7.6" textLength="21.5" lengthAdjust="spacingAndGlyphs" fill="#555e6b">Лист8</text>
<path d="M447.5,586 L441.5,594.6 Q440.6,595.6 439,595.6 L420,595.6" fill="none" stroke="#9ba1aa" stroke-width="0.7"/>
<rect x="427.6" y="588.6" width="6.6" height="5" fill="#eaf0fb" stroke="#5f7fb8" stroke-width="0.8"/>
<circle cx="427.6" cy="588.6" r="1.5" fill="#f2b630"/>
<rect x="474.6" y="586.6" width="3" height="8.8" fill="#fafbfc" stroke="#8f949c" stroke-width="0.6"/>
<rect x="479.5" y="586" width="306" height="10" fill="#eceef2"/>
<path d="M485.6,588.4 L485.6,593.6 L482.4,591 Z" fill="#333"/>
<rect x="539" y="586.6" width="144.6" height="8.8" fill="url(#gScroll)" stroke="#b3b8c0" stroke-width="0.7" rx="1"/>
<line x1="609.6" y1="589.2" x2="609.6" y2="592.8" stroke="#9aa0a8" stroke-width="0.6" />
<line x1="610.9" y1="589.2" x2="610.9" y2="592.8" stroke="#9aa0a8" stroke-width="0.6" />
<line x1="612.2" y1="589.2" x2="612.2" y2="592.8" stroke="#9aa0a8" stroke-width="0.6" />
<path d="M774.2,588.4 L774.2,593.6 L777.4,591 Z" fill="#333"/>
<rect x="781.4" y="586.6" width="3" height="8.8" fill="#fafbfc" stroke="#8f949c" stroke-width="0.6"/>
<rect x="785.6" y="585.5" width="9.4" height="11" fill="#e9ecf0"/>
<rect x="6" y="596.4" width="789" height="13.6" fill="url(#gStatus)"/>
<line x1="6" y1="596.4" x2="795" y2="596.4" stroke="#bfc4cb" stroke-width="0.7" />
<text x="12" y="605.8" font-size="7.4" textLength="22.5" lengthAdjust="spacingAndGlyphs" fill="#333">Готово</text>
<line x1="40.6" y1="598" x2="40.6" y2="609" stroke="#a9aeb6" stroke-width="0.8" />
<line x1="41.4" y1="598" x2="41.4" y2="609" stroke="#fafbfc" stroke-width="0.8" />
<line x1="634.6" y1="598" x2="634.6" y2="609" stroke="#a9aeb6" stroke-width="0.8" />
<rect x="637.6" y="598.8" width="9.4" height="8.6" fill="#fbe9a6" stroke="#e8b11e" stroke-width="1" rx="1"/>
<rect x="639.6" y="600.8" width="5.6" height="4.6" fill="#fff" stroke="#666" stroke-width="0.6"/>
<line x1="639.6" y1="602.4" x2="645.2" y2="602.4" stroke="#666" stroke-width="0.5" />
<line x1="639.6" y1="603.9" x2="645.2" y2="603.9" stroke="#666" stroke-width="0.5" />
<line x1="641.5" y1="600.8" x2="641.5" y2="605.4" stroke="#666" stroke-width="0.5" />
<line x1="643.4" y1="600.8" x2="643.4" y2="605.4" stroke="#666" stroke-width="0.5" />
<rect x="651" y="600.2" width="6.4" height="5.8" fill="#eceef1" stroke="#666" stroke-width="0.8"/>
<rect x="652.6" y="601.6" width="3.2" height="3" fill="#fff" stroke="#999" stroke-width="0.4"/>
<rect x="662" y="600.2" width="6.4" height="5.8" fill="#f4f5f7" stroke="#666" stroke-width="0.8"/>
<line x1="665.2" y1="600.2" x2="665.2" y2="604" stroke="#666" stroke-width="0.8" />
<line x1="662" y1="604.2" x2="668.4" y2="604.2" stroke="#666" stroke-width="0.6" />
<text x="678.6" y="605.8" font-size="7.4" textLength="17.6" lengthAdjust="spacingAndGlyphs" fill="#333">150%</text>
<circle cx="706" cy="603" r="4.6" fill="#f5f6f8" stroke="#7d838c" stroke-width="0.8"/>
<line x1="703.6" y1="603" x2="708.4" y2="603" stroke="#333" stroke-width="1.3" />
<line x1="712.4" y1="603" x2="771.8" y2="603" stroke="#8d939b" stroke-width="0.8" />
<line x1="741.8" y1="600.8" x2="741.8" y2="605.2" stroke="#8d939b" stroke-width="0.7" />
<path d="M744.8,599.2 L749.2,599.2 L749.2,604.2 L747,606.8 L744.8,604.2 Z" fill="#f4f5f7" stroke="#6f757e" stroke-width="0.7"/>
<circle cx="778.2" cy="603" r="4.6" fill="#f5f6f8" stroke="#7d838c" stroke-width="0.8"/>
<line x1="775.8" y1="603" x2="780.6" y2="603" stroke="#333" stroke-width="1.3" />
<line x1="778.2" y1="600.6" x2="778.2" y2="605.4" stroke="#333" stroke-width="1.3" />
<rect x="791.6" y="603.4" width="1.2" height="1.2" fill="#aab0b8"/>
<rect x="791.6" y="605.8" width="1.2" height="1.2" fill="#aab0b8"/>
<rect x="791.6" y="608.2" width="1.2" height="1.2" fill="#aab0b8"/>
<rect x="789.2" y="605.8" width="1.2" height="1.2" fill="#aab0b8"/>
<rect x="789.2" y="608.2" width="1.2" height="1.2" fill="#aab0b8"/>
<rect x="786.8" y="608.2" width="1.2" height="1.2" fill="#aab0b8"/>
<rect x="0" y="610" width="800" height="4.6" fill="#c55b69"/>
<rect x="110.6" y="616" width="37" height="24" fill="#ffffff" opacity="0.16"/>
<rect x="110.6" y="616" width="37" height="24" fill="none" stroke="#c9bcc3" stroke-width="0.6" opacity="0.6"/>
<rect x="227.6" y="616" width="36" height="24" fill="#ffffff" opacity="0.28"/>
<rect x="227.6" y="616" width="36" height="24" fill="none" stroke="#d9cfd4" stroke-width="0.6" opacity="0.8"/>
<rect x="265.6" y="616" width="36" height="24" fill="#ffffff" opacity="0.12"/>
<rect x="265.6" y="616" width="36" height="24" fill="none" stroke="#c9bcc3" stroke-width="0.6" opacity="0.5"/>
<rect x="304.6" y="616" width="36" height="24" fill="#ffffff" opacity="0.12"/>
<rect x="304.6" y="616" width="36" height="24" fill="none" stroke="#c9bcc3" stroke-width="0.6" opacity="0.5"/>
<path d="M7.6,621.6 L14.6,620.4 L14.6,627 L7.6,627 Z M15.6,620.2 L24.2,618.8 L24.2,627 L15.6,627 Z M7.6,628 L14.6,628 L14.6,634.6 L7.6,633.4 Z M15.6,628 L24.2,628 L24.2,636.2 L15.6,634.8 Z" fill="#fff"/>
<circle cx="50" cy="627.6" r="6.9" fill="none" stroke="#2e92ec" stroke-width="3.4"/>
<rect x="44.6" y="626.2" width="12.6" height="2.6" fill="#2e92ec"/>
<rect x="52" y="628.9" width="8" height="3.2" fill="#957d8a"/>
<path d="M40.6,634.4 Q39.6,621.6 52,617 Q58.6,614.8 60.6,618 Q57.6,616.6 51,619.6 Q43.6,624 43.6,633.6 Z" fill="#4ea8f4"/>
<path d="M63.8,625.4 L63.8,630.6 L66.8,628 Z" fill="#2b6fd6"/>
<rect x="87" y="617.8" width="12.4" height="17.6" fill="#fdfdfe" stroke="#c7d3e8" stroke-width="0.5"/>
<line x1="92" y1="620.6" x2="98.2" y2="620.6" stroke="#9db4da" stroke-width="0.6" />
<line x1="92" y1="623.0" x2="98.2" y2="623.0" stroke="#9db4da" stroke-width="0.6" />
<line x1="92" y1="625.4" x2="98.2" y2="625.4" stroke="#9db4da" stroke-width="0.6" />
<line x1="92" y1="627.8000000000001" x2="98.2" y2="627.8000000000001" stroke="#9db4da" stroke-width="0.6" />
<line x1="92" y1="630.2" x2="98.2" y2="630.2" stroke="#9db4da" stroke-width="0.6" />
<line x1="92" y1="632.6" x2="98.2" y2="632.6" stroke="#9db4da" stroke-width="0.6" />
<rect x="80.6" y="620.2" width="13.4" height="13.4" fill="#2a5caa" stroke="#1d4688" stroke-width="0.5" rx="0.6"/>
<text x="87.3" y="631" font-size="11" fill="#fff" font-weight="bold" text-anchor="middle">W</text>
<circle cx="129.3" cy="627.4" r="9.9" fill="#db4437"/>
<path d="M129.3,627.4 L137.87,622.45 A9.9,9.9 0 0 1 129.3,637.3 Z" fill="#ffcd40"/>
<path d="M129.3,627.4 L129.3,637.3 A9.9,9.9 0 0 1 120.73,622.45 Z" fill="#0f9d58"/>
<circle cx="129.3" cy="627.4" r="4.6" fill="#fff"/>
<circle cx="129.3" cy="627.4" r="3.6" fill="#4285f4"/>
<path d="M160.6,619.6 L171,619.6 L175,623.6 L175,636.4 L160.6,636.4 Z" fill="#fdfdfd" stroke="#d6d6d6" stroke-width="0.5"/>
<path d="M171,619.6 L171,623.6 L175,623.6 Z" fill="#dcdcdc"/>
<rect x="197.8" y="618" width="17.2" height="17.6" fill="#3d9be0" stroke="#9fd2f4" stroke-width="0.9" rx="1.6"/>
<rect x="199.4" y="620.4" width="14" height="11.6" fill="#2278c8"/>
<rect x="199.4" y="624.4" width="14" height="5.6" fill="#174f94"/>
<text x="206.4" y="629.2" font-size="5" textLength="12" lengthAdjust="spacingAndGlyphs" fill="#fff" font-weight="bold" text-anchor="middle" font-family='"Liberation Serif", "DejaVu Serif", serif'>IPTV</text>
<rect x="240.6" y="618.2" width="13.6" height="17.4" fill="#f4faf5" stroke="#b9d3bd" stroke-width="0.5"/>
<line x1="246" y1="621.0" x2="253.4" y2="621.0" stroke="#8fc49a" stroke-width="0.7" />
<line x1="246" y1="623.5" x2="253.4" y2="623.5" stroke="#8fc49a" stroke-width="0.7" />
<line x1="246" y1="626.0" x2="253.4" y2="626.0" stroke="#8fc49a" stroke-width="0.7" />
<line x1="246" y1="628.5" x2="253.4" y2="628.5" stroke="#8fc49a" stroke-width="0.7" />
<line x1="246" y1="631.0" x2="253.4" y2="631.0" stroke="#8fc49a" stroke-width="0.7" />
<line x1="246" y1="633.5" x2="253.4" y2="633.5" stroke="#8fc49a" stroke-width="0.7" />
<rect x="246.6" y="628.6" width="7.6" height="6.4" fill="#e6f3e8" stroke="#7fb98a" stroke-width="0.5"/>
<rect x="235.4" y="619.6" width="13.2" height="13.6" fill="#3a9a4c" stroke="#1d6b2c" stroke-width="0.5" rx="0.6"/>
<text x="242" y="630.6" font-size="11.4" fill="#fff" font-weight="bold" text-anchor="middle">X</text>
<circle cx="284" cy="627.4" r="9.6" fill="#fff"/>
<path d="M279.6,621.6 L284,628 L284,634.6" fill="none" stroke="#f5362c" stroke-width="2.3" stroke-linecap="round" stroke-linejoin="round"/>
<path d="M288.6,621.4 L284,628" fill="none" stroke="#f0469a" stroke-width="2.3" stroke-linecap="round"/>
<circle cx="323" cy="627.5" r="8.8" fill="#2a9fd8"/>
<path d="M317.6,627.4 L328.6,623 L326.8,632.6 L323.4,630.2 L321.8,631.8 L321.6,629.2 Z" fill="#fff"/>
<path d="M682.8,629.6 L685.2,627 L687.6,629.6 Z" fill="#fff"/>
<path d="M696,626.6 L697.8,626.6 L700.4,624.2 L700.4,632.8 L697.8,630.4 L696,630.4 Z" fill="#fff"/>
<path d="M702,626 Q703.6,628.5 702,631" fill="none" stroke="#fff" stroke-width="0.8"/>
<path d="M703.6,624.8 Q706,628.5 703.6,632.2" fill="none" stroke="#fff" stroke-width="0.8"/>
<rect x="713" y="624.6" width="6.6" height="4.8" fill="none" stroke="#fff" stroke-width="0.9"/>
<line x1="716.3" y1="629.4" x2="716.3" y2="631.8" stroke="#fff" stroke-width="0.9" />
<line x1="713.6" y1="632.2" x2="719.2" y2="632.2" stroke="#fff" stroke-width="0.9" />
<rect x="710.8" y="623.6" width="3" height="2.6" fill="#fff"/>
<text x="729.6" y="631.6" font-size="7.2" textLength="13.6" lengthAdjust="spacingAndGlyphs" fill="#fff">РУС</text>
<text x="763.6" y="625.4" font-size="7.2" textLength="16.4" lengthAdjust="spacingAndGlyphs" fill="#fff">10:38</text>
<text x="754.4" y="635.8" font-size="7.2" textLength="33.6" lengthAdjust="spacingAndGlyphs" fill="#fff">24.10.2025</text>
</svg>
</body></html>
